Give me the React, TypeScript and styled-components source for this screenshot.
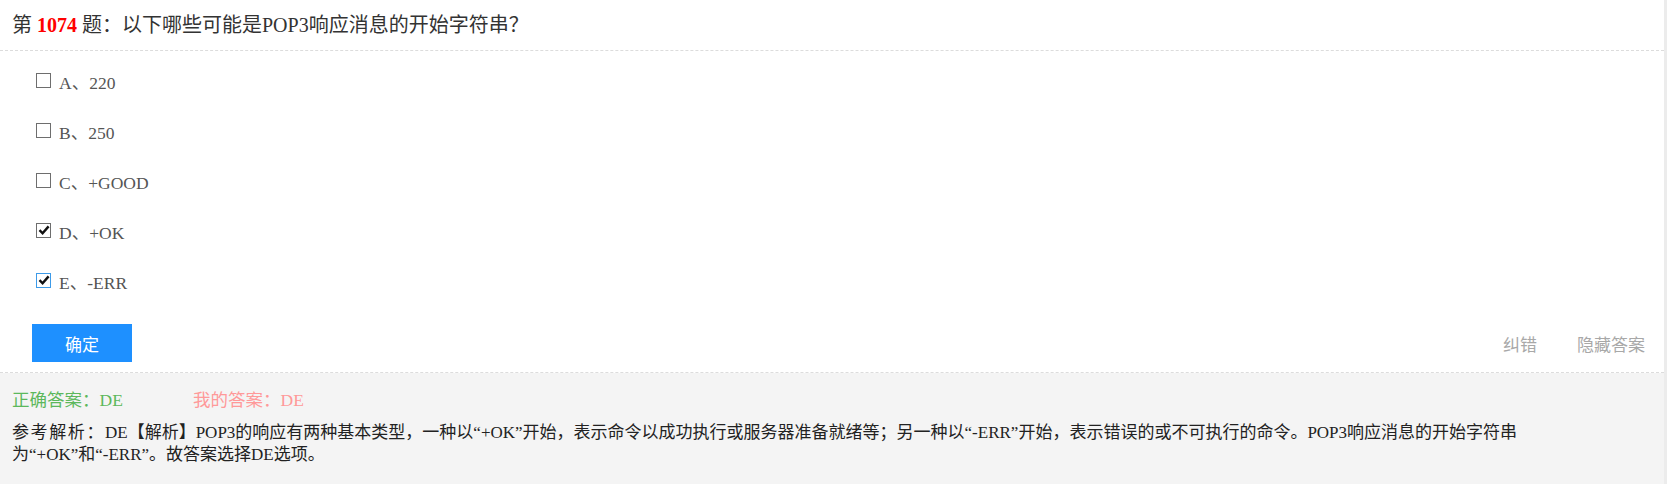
import React from "react";
import styled, { createGlobalStyle } from "styled-components";

const Global = createGlobalStyle`
  html, body { margin: 0; padding: 0; background: #fff; }
  body { font-family: "Liberation Serif", "Noto Sans CJK SC", serif; }
`;

const Page = styled.div`
  width: 1664px;
  border-right: 3px solid #ececec;
  background: #fff;
`;

const Header = styled.div`
  height: 50px;
  line-height: 50px;
  padding-left: 12px;
  font-size: 20px;
  color: #333;
  border-bottom: 1px dashed #dcdcdc;
  white-space: nowrap;
`;

const Num = styled.b`
  color: #f00;
  font-weight: bold;
`;

const Options = styled.div`
  padding: 5px 0 0 36px;
  display: flex;
  flex-direction: column;
`;

const Row = styled.label`
  height: 50px;
  display: flex;
  align-items: center;
  gap: 8px;
  font-size: 17.5px;
  color: #555;
`;

const Box = styled.span<{ $focus?: boolean }>`
  width: 15px;
  height: 15px;
  box-sizing: border-box;
  border: 1.5px solid ${(p) => (p.$focus ? "#3d9be9" : "#6e6e6e")};
  background: #fff;
  display: inline-flex;
  align-items: center;
  justify-content: center;
  margin-top: -2px;
`;

const Actions = styled.div`
  display: flex;
  align-items: center;
  justify-content: space-between;
  padding: 18px 19px 10px 32px;
  border-bottom: 1px dashed #dcdcdc;
`;

const Submit = styled.button`
  width: 100px;
  height: 38px;
  border: none;
  background: #1e90ff;
  color: #fff;
  font-family: "Noto Sans CJK SC", sans-serif;
  font-size: 17px;
  cursor: pointer;
`;

const Links = styled.div`
  display: flex;
  gap: 40px;
`;

const LinkText = styled.span`
  font-family: "Noto Sans CJK SC", sans-serif;
  font-size: 17px;
  color: #a8a8a8;
`;

const Analysis = styled.div`
  background: #f4f4f4;
  padding: 15px 100px 18px 12px;
`;

const AnswerRow = styled.div`
  display: flex;
  height: 24px;
  line-height: 24px;
  font-size: 17.5px;
`;

const Answer = styled.span<{ $color: string; $width?: number }>`
  color: ${(p) => p.$color};
  width: ${(p) => (p.$width ? `${p.$width}px` : "auto")};
`;

const Explain = styled.div`
  margin-top: 10px;
  font-size: 17px;
  line-height: 22px;
  color: #222;
`;

const Label = styled.span`
  letter-spacing: 1.6px;
`;

const Check = () => (
  <svg width="12" height="12" viewBox="0 0 12 12">
    <path d="M1.5 6.2 L4.6 9.3 L10.6 2.4" fill="none" stroke="#111" strokeWidth="2.4" />
  </svg>
);

const opts = [
  { k: "A", t: "220", c: false },
  { k: "B", t: "250", c: false },
  { k: "C", t: "+GOOD", c: false },
  { k: "D", t: "+OK", c: true },
  { k: "E", t: "-ERR", c: true, f: true },
];

export default function App() {
  return (
    <>
      <Global />
      <Page>
        <Header>
          第 <Num>1074</Num> 题：以下哪些可能是POP3响应消息的开始字符串？
        </Header>
        <Options>
          {opts.map((o) => (
            <Row key={o.k}>
              <Box $focus={o.f}>{o.c && <Check />}</Box>
              <span>
                {o.k}、{o.t}
              </span>
            </Row>
          ))}
        </Options>
        <Actions>
          <Submit>确定</Submit>
          <Links>
            <LinkText>纠错</LinkText>
            <LinkText>隐藏答案</LinkText>
          </Links>
        </Actions>
        <Analysis>
          <AnswerRow>
            <Answer $color="#5cb85c" $width={181}>正确答案：DE</Answer>
            <Answer $color="#ff9999">我的答案：DE</Answer>
          </AnswerRow>
          <Explain>
            <Label>参考解析：</Label>DE【解析】POP3的响应有两种基本类型，一种以“+OK”开始，表示命令以成功执行或服务器准备就绪等；另一种以“-ERR”开始，表示错误的或不可执行的命令。POP3响应消息的开始字符串为“+OK”和“-ERR”。故答案选择DE选项。
          </Explain>
        </Analysis>
      </Page>
    </>
  );
}
